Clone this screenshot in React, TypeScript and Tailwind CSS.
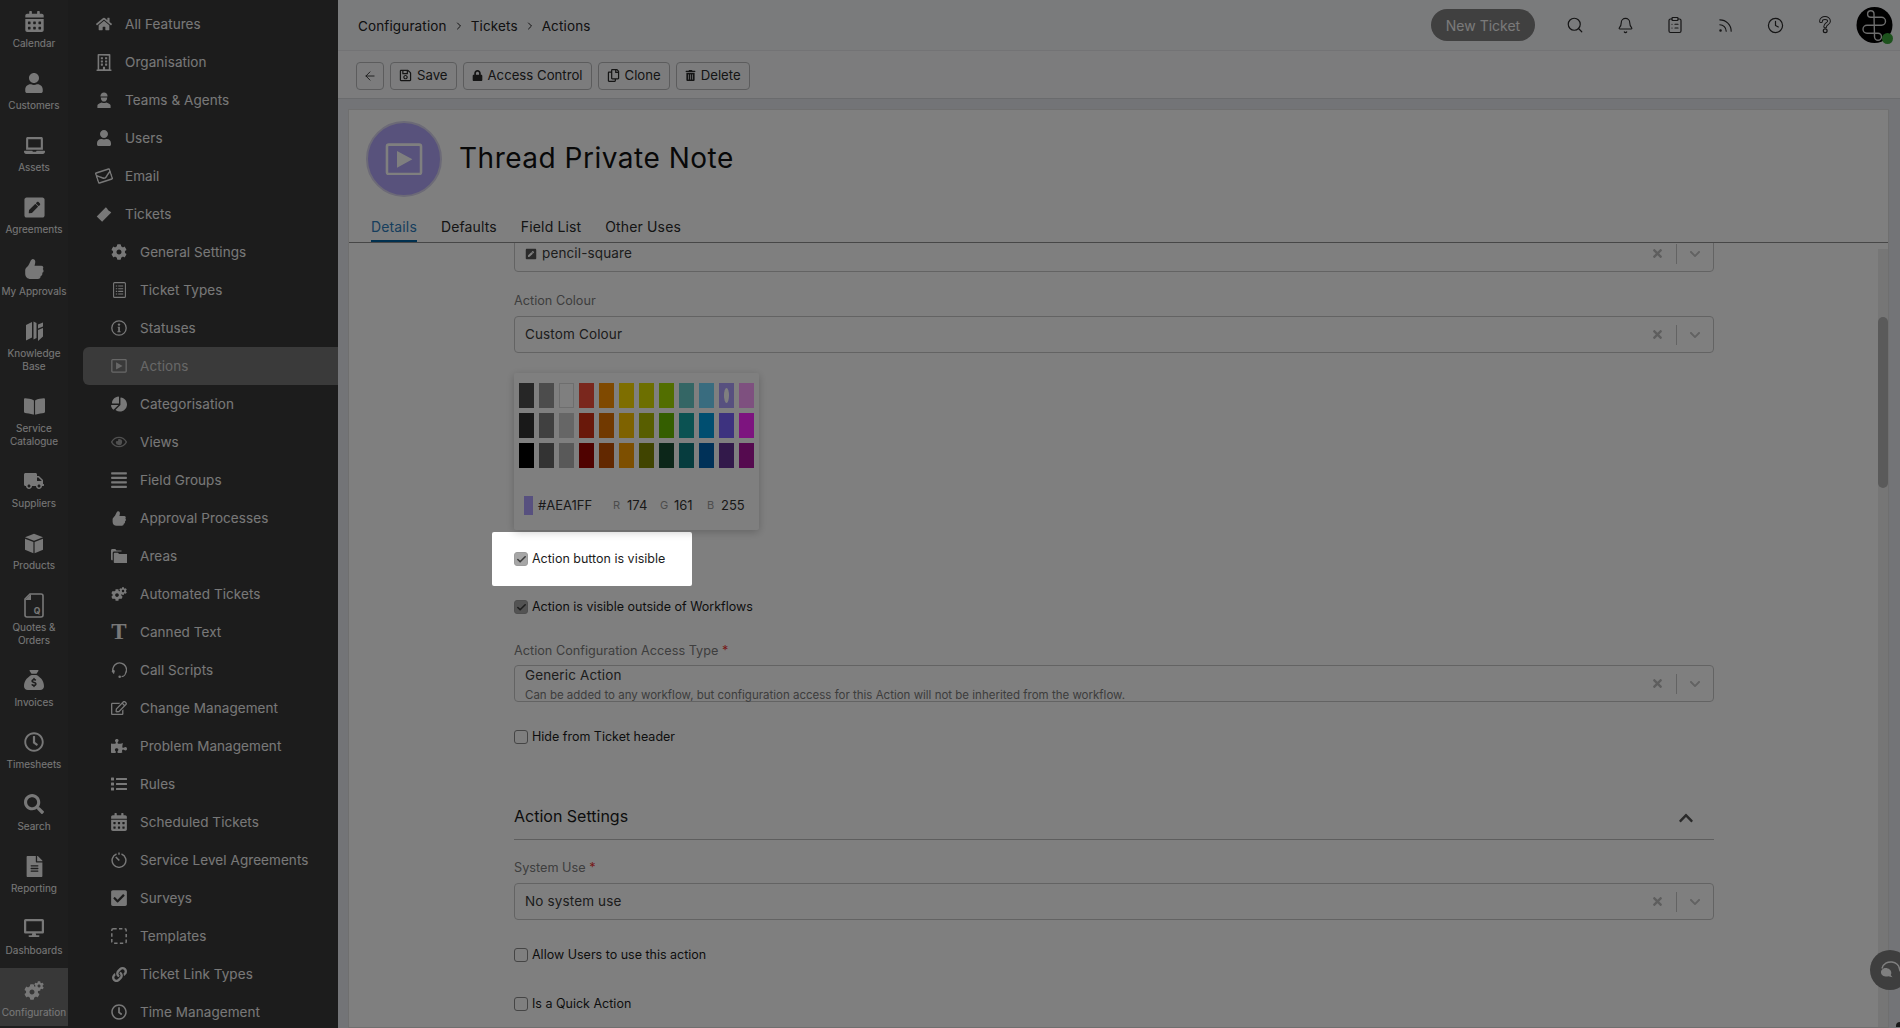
import React from "react";
import {
  FaHome, FaRegBuilding, FaUser, FaRegEnvelope, FaCog, FaChartPie, FaRegEye, FaAlignJustify,
  FaRegEdit, FaPuzzlePiece, FaList, FaCalendarAlt, FaCheckSquare, FaLink, FaRegClock,
  FaPenSquare, FaBookOpen, FaTruck, FaSearch, FaFileAlt, FaDesktop, FaLaptop, FaRegSave, FaLock,
  FaRegCopy, FaTrashAlt, FaTimes, FaChevronDown, FaChevronUp,
} from "react-icons/fa";
import { FaSackDollar } from "react-icons/fa6";
import { ArrowLeft, Search, Bell, ClipboardList, Rss, Clock, Check, ChevronRight } from "lucide-react";

const QuoteIcon = () => (
  <svg width="20" height="25" viewBox="0 0 20 25" fill="none">
    <path d="M6 1H17a2 2 0 0 1 2 2V22a2 2 0 0 1-2 2H3a2 2 0 0 1-2-2V6Z" stroke="currentColor" strokeWidth="1.6" fill="none" />
    <path d="M1 7H7V1Z" fill="currentColor" />
    <text x="13" y="21" textAnchor="middle" fontSize="8.5" fontWeight="700" fill="currentColor" fontFamily="Inter, sans-serif">Q</text>
  </svg>
);
const PlayBox = ({ size = 16, stroke = 1.3 }: { size?: number; stroke?: number }) => (
  <svg width={size} height={size * 0.86} viewBox="0 0 16 14" fill="none">
    <rect x=".7" y=".7" width="14.6" height="12.6" rx=".8" stroke="currentColor" strokeWidth={stroke} />
    <path d="M5 3.4 11.6 7 5 10.6Z" fill="currentColor" />
  </svg>
);
const Thumb = ({ size }: { size: number }) => (
  <svg width={size} height={size} viewBox="0 0 20 20" fill="currentColor">
    <path d="M9 1C11 1 11.500 3 11 5L10.500 7H16.500C18.500 7 19 9 18 10C19 11 19 13 17.500 13.500C18 15 17 16.500 16 16.500C16 18 15 19 13.500 19H7C4 19 2 17 2 14V11C2 9 4 8 5 6.500C6.500 4.500 7 1 9 1Z" />
  </svg>
);
const Books = () => (
  <svg width="20" height="22" viewBox="0 0 20 22" fill="currentColor">
    <path d="M2 5 8 2V17.500L2 20.500Z" />
    <path d="M9.500 1.500 12.500 3V18L9.500 19.500Z" />
    <path d="M14 4.500 19 2.500V6.500L14 8.500ZM14 10 19 8V16.500L14 21Z" />
  </svg>
);
const Crate = () => (
  <svg width="20" height="21" viewBox="0 0 20 21" fill="currentColor">
    <path d="M10 .8 19 4.300 10 7.800 1 4.300Z" />
    <path d="M1 5.800 9.400 9.100V20.300L1 16.800Z" />
    <path d="M19 5.800 10.600 9.100V20.300L19 16.800Z" />
  </svg>
);
const Cogs = ({ big, small }: { big: number; small: number }) => (
  <span className="relative inline-block" style={{ width: big + small * 0.45, height: big + small * 0.3 }}>
    <FaCog size={big} className="absolute left-0 bottom-0" />
    <FaCog size={small} className="absolute right-0 top-0" />
  </span>
);
const HardHat = () => (
  <svg width="14" height="16" viewBox="0 0 14 16" fill="currentColor">
    <path d="M3.400 4.600C3.400 1.800 5 .4 7 .4s3.600 1.400 3.600 4.200Z" />
    <path d="M3.800 5.400h6.400C10.200 8 8.800 9.600 7 9.600S3.800 8 3.800 5.400Z" />
    <path d="M.4 16v-2.400c0-1.600 2.600-2.600 4.400-3.200.7.5 1.400.7 2.200.7s1.500-.2 2.200-.7c1.800.6 4.400 1.600 4.400 3.200V16Z" />
  </svg>
);
const Ticket = () => (
  <svg width="17" height="17" viewBox="0 0 17 17" fill="currentColor">
    <path d="M10.500.8 12 2.300C12.300 3.300 13.700 4.700 14.700 5L16.200 6.500 6.500 16.200 .8 10.500Z" />
  </svg>
);
const ListBox = () => (
  <svg width="13" height="16" viewBox="0 0 13 16" fill="none" stroke="currentColor">
    <rect x=".6" y=".6" width="11.800" height="14.800" rx="1" strokeWidth="1.100" />
    <path d="M2.800 4h1.400M5.200 4h5M2.800 6.700h1.400M5.200 6.700h5M2.800 9.400h1.400M5.200 9.400h5M2.800 12h1.400M5.200 12h5" strokeWidth="1.100" />
  </svg>
);
const InfoRing = () => (
  <svg width="16" height="16" viewBox="0 0 16 16" fill="none">
    <circle cx="8" cy="8" r="7.200" stroke="currentColor" strokeWidth="1.300" />
    <circle cx="8" cy="4.600" r="1.200" fill="currentColor" />
    <path d="M6.700 6.800h2.200v4.400h.7v1H6.400v-1h.8V7.800h-.5Z" fill="currentColor" />
  </svg>
);
const FolderStack = () => (
  <svg width="16" height="14" viewBox="0 0 16 14" fill="currentColor">
    <path d="M0 1.500C0 .7.6 0 1.300 0h3l1.200 1.400h5V2.600H3.200c-.9 0-1.500.7-1.500 1.500v7.200H1.300C.6 11.300 0 10.700 0 10Z" />
    <path d="M2.800 4.800c0-.6.5-1.100 1.100-1.100h3l1.200 1.300H16v9H3.900c-.6 0-1.100-.5-1.100-1.100Z" />
  </svg>
);
const Headset = () => (
  <svg width="16" height="16" viewBox="0 0 16 16" fill="none" stroke="currentColor">
    <path d="M3 11.500A6.800 6.800 0 1 1 14.600 11" strokeWidth="1.500" fill="none" />
    <path d="M14.600 11c-.3 2-2 3.400-4 3.700" strokeWidth="1.200" />
    <circle cx="2.300" cy="9.200" r="1.400" fill="currentColor" stroke="none" />
    <circle cx="8.700" cy="14.700" r="1.300" fill="currentColor" stroke="none" />
  </svg>
);
const Stopwatch = () => (
  <svg width="16" height="16" viewBox="0 0 16 16" fill="none" stroke="currentColor">
    <path d="M5.500 2A6.900 6.900 0 1 0 10.500 2" strokeWidth="1.400" />
    <path d="M8 .5v2.200" strokeWidth="1.500" />
    <path d="M4.800 5 8.300 8.500" strokeWidth="1.700" />
  </svg>
);
const Dashed = () => (
  <svg width="16" height="16" viewBox="0 0 16 16" fill="none" stroke="currentColor">
    <rect x=".8" y=".8" width="14.400" height="14.400" rx="1.500" strokeWidth="1.500" strokeDasharray="3.400 2.300" />
  </svg>
);
const Serif = () => <span className="font-['Liberation_Serif',serif] font-bold text-[23px] leading-[16px]">T</span>;
const HelpMark = () => (
  <svg width="14" height="18" viewBox="0 0 14 18" fill="none">
    <path d="M3 5.200C3 3 5 2 7 2s4 1.200 4 3.200c0 2.400-3.800 2.800-3.800 5.200" stroke="#2a2a2a" strokeWidth="3.800" strokeLinecap="round" />
    <path d="M3 5.200C3 3 5 2 7 2s4 1.200 4 3.200c0 2.400-3.800 2.800-3.800 5.200" stroke="#f5f6f9" strokeWidth="1.800" strokeLinecap="round" />
    <circle cx="7.200" cy="14.800" r="1.900" stroke="#2a2a2a" strokeWidth="1.200" />
  </svg>
);
const Logo = () => (
  <svg width="37" height="36" viewBox="0 0 37 36" fill="none">
    <circle cx="18.500" cy="18" r="18" fill="#000" />
    <path d="M18 7A3.200 3.200 0 1 0 14.800 10.200H25.500A4 4 0 0 1 25.500 18.200H11A4 4 0 0 0 11 26.200H22A3.500 3.500 0 1 1 18.500 29.700C18.500 25 18 12 18 7Z" stroke="#d8d8d8" strokeWidth="1.400" strokeLinejoin="round" />
  </svg>
);
const Bubbles = () => (
  <svg width="24" height="20" viewBox="0 0 24 20">
    <path d="M3 8.500C4 3.500 9 1.500 13 2c4 .5 7 3.500 7.500 7 .2 2 1.500 3 2.500 3.800" fill="none" stroke="#fff" strokeWidth="1.500" />
    <path d="M6.500 8c3.200 0 5.800 2.200 5.800 4.700 0 1.400-.6 2.300-.6 2.300l1.800 2.200-4.200-.9c-3.500.8-7.300-1-7.300-3.900C2 10.300 3.900 8 6.500 8Z" fill="#fff" />
  </svg>
);

const rail: { l: string[]; i: React.ReactNode }[] = [
  { l: ["Calendar"], i: <FaCalendarAlt size={21} /> },
  { l: ["Customers"], i: <FaUser size={20} /> },
  { l: ["Assets"], i: <FaLaptop size={21} /> },
  { l: ["Agreements"], i: <FaPenSquare size={23} /> },
  { l: ["My Approvals"], i: <Thumb size={22} /> },
  { l: ["Knowledge", "Base"], i: <Books /> },
  { l: ["Service", "Catalogue"], i: <FaBookOpen size={21} /> },
  { l: ["Suppliers"], i: <FaTruck size={20} /> },
  { l: ["Products"], i: <Crate /> },
  { l: ["Quotes &", "Orders"], i: <QuoteIcon /> },
  { l: ["Invoices"], i: <FaSackDollar size={20} /> },
  { l: ["Timesheets"], i: <FaRegClock size={20} /> },
  { l: ["Search"], i: <FaSearch size={20} /> },
  { l: ["Reporting"], i: <FaFileAlt size={21} /> },
  { l: ["Dashboards"], i: <FaDesktop size={20} /> },
  { l: ["Configuration"], i: <Cogs big={16} small={10} /> },
];

const nav: { t: string; i: React.ReactNode; sub?: boolean; active?: boolean; dim?: boolean }[] = [
  { t: "All Features", i: <FaHome size={16} /> },
  { t: "Organisation", i: <FaRegBuilding size={17} /> },
  { t: "Teams & Agents", i: <HardHat /> },
  { t: "Users", i: <FaUser size={16} /> },
  { t: "Email", i: <FaRegEnvelope size={16} className="-rotate-[18deg]" /> },
  { t: "Tickets", i: <Ticket /> },
  { t: "General Settings", i: <FaCog size={16} />, sub: true },
  { t: "Ticket Types", i: <ListBox />, sub: true },
  { t: "Statuses", i: <InfoRing />, sub: true },
  { t: "Actions", i: <PlayBox />, sub: true, active: true },
  { t: "Categorisation", i: <FaChartPie size={16} className="-scale-x-100" />, sub: true },
  { t: "Views", i: <FaRegEye size={16} />, sub: true, dim: true },
  { t: "Field Groups", i: <FaAlignJustify size={18} />, sub: true },
  { t: "Approval Processes", i: <Thumb size={17} />, sub: true },
  { t: "Areas", i: <FolderStack />, sub: true },
  { t: "Automated Tickets", i: <Cogs big={12} small={8} />, sub: true },
  { t: "Canned Text", i: <Serif />, sub: true },
  { t: "Call Scripts", i: <Headset />, sub: true },
  { t: "Change Management", i: <FaRegEdit size={16} />, sub: true },
  { t: "Problem Management", i: <FaPuzzlePiece size={16} />, sub: true },
  { t: "Rules", i: <FaList size={16} />, sub: true },
  { t: "Scheduled Tickets", i: <FaCalendarAlt size={18} />, sub: true },
  { t: "Service Level Agreements", i: <Stopwatch />, sub: true },
  { t: "Surveys", i: <FaCheckSquare size={18} />, sub: true },
  { t: "Templates", i: <Dashed />, sub: true },
  { t: "Ticket Link Types", i: <FaLink size={15} />, sub: true },
  { t: "Time Management", i: <FaRegClock size={16} />, sub: true },
];

const palette = [
  "#4D4D4D", "#999999", "#FFFFFF", "#F44E3B", "#FE9200", "#FCDC00", "#DBDF00", "#A4DD00", "#68CCCA", "#73D8FF", "#AEA1FF", "#FDA1FF",
  "#333333", "#808080", "#CCCCCC", "#D33115", "#E27300", "#FCC400", "#B0BC00", "#68BC00", "#16A5A5", "#009CE0", "#7B64FF", "#FA28FF",
  "#000000", "#666666", "#B3B3B3", "#9F0500", "#C45100", "#FB9E00", "#808900", "#194D33", "#0C797D", "#0062B1", "#653294", "#AB149E",
];

const Select = ({ children }: { children: React.ReactNode }) => (
  <div className="h-[37px] border border-[#c6c6c6] rounded-[4px] flex items-center pl-[10px] bg-white text-[13.500px] tracking-[0.01em] text-[#3a3a3a]">
    <div className="flex-1 min-w-0">{children}</div>
    <FaTimes size={13} className="text-[#bdbdbd]" />
    <span className="w-px h-[20px] bg-[#c6c6c6] ml-[12px]" />
    <FaChevronDown size={12} className="text-[#c4c4c4] ml-[12px] mr-[12px]" />
  </div>
);
const Box = ({ on }: { on?: boolean }) => (
  <span className={`w-[14px] h-[14px] rounded-[3px] border flex items-center justify-center shrink-0 ${on ? "bg-[#a6a6a6] border-[#9c9c9c]" : "bg-white border-[#8a8a8a]"}`}>
    {on && <Check size={11} strokeWidth={3.5} className="text-[#3c3c3c]" />}
  </span>
);
const CheckRow = ({ label, on, className }: { label: string; on?: boolean; className: string }) => (
  <div className={`flex items-center gap-[4px] h-[20px] text-[12.500px] text-[#1c1c1c] ${className}`}>
    <Box on={on} />
    <span>{label}</span>
  </div>
);
const Label = ({ t, req, className }: { t: string; req?: boolean; className: string }) => (
  <div className={`h-[20px] leading-[20px] text-[12.700px] text-[#7c7c7c] ${className}`}>
    {t} {req && <span className="text-[#e33]">*</span>}
  </div>
);
const Btn = ({ icon, t, narrow }: { icon: React.ReactNode; t?: string; narrow?: boolean }) => (
  <div className={`h-[28px] border border-[#b8b8bb] rounded-[4px] flex items-center gap-[5px] text-[13.200px] text-[#2a2a2a] ${narrow ? "w-[28px] justify-center" : "px-[8px]"}`}>
    {icon}
    {t && <span>{t}</span>}
  </div>
);

export default function App() {
  return (
    <div className="relative flex w-[1900px] h-[1028px] overflow-hidden bg-white font-['Inter',sans-serif]">
      {/* icon rail */}
      <aside className="w-[68px] shrink-0 bg-[#3d3d3d] text-[#f0f0f0] flex flex-col -mt-[1px]">
        {rail.map((r) => {
          const active = r.l[0] === "Configuration";
          return (
            <div key={r.l[0]} className={`w-[68px] flex flex-col items-center pt-[11px] pb-[7px] mb-[4px] ${active ? "bg-[#707070]" : ""}`}>
              <div className="h-[22px] flex items-center justify-center">{r.i}</div>
              <div className="mt-[5px] text-[10px] leading-[13px] text-center whitespace-nowrap">
                {r.l.map((x) => <div key={x}>{x}</div>)}
              </div>
            </div>
          );
        })}
      </aside>
      {/* nav */}
      <nav className="w-[270px] shrink-0 bg-[#383838] text-[#f0f0f0] pt-[5px] overflow-hidden">
        {nav.map((n) => (
          <div key={n.t} className={`h-[38px] ml-[15px] flex items-center text-[13.500px] tracking-[0.005em] rounded-l-[6px] ${n.sub ? "pl-[28px]" : "pl-[13px]"} ${n.active ? "bg-[#747474] text-[#cfcfcf]" : ""}`}>
            <span className={`w-[16px] flex justify-center shrink-0 mr-[13px] ${n.dim ? "text-[#a0a0a0]" : ""}`}>{n.i}</span>
            <span>{n.t}</span>
          </div>
        ))}
      </nav>
      {/* main */}
      <main className="flex-1 min-w-0 flex flex-col bg-[#e7e9ee]">
        <header className="h-[51px] shrink-0 bg-[#f5f6f9] border-b border-[#e6e7ea] flex items-center text-[#2a2a2a]">
          <div className="pl-[20px] pt-[2px] flex items-center text-[13.500px] tracking-[0.01em] text-[#222]">
            <span>Configuration</span>
            <ChevronRight size={12} className="mx-[6px]" />
            <span>Tickets</span>
            <ChevronRight size={12} className="mx-[6px]" />
            <span>Actions</span>
          </div>
          <div className="ml-auto flex items-center">
            <div className="w-[104px] h-[32px] rounded-full bg-[#808080] text-[#f4f4f4] flex items-center justify-center text-[14px]">New Ticket</div>
            <div className="ml-[15px] flex items-center">
              {[<Search size={18} strokeWidth={1.6} />, <Bell size={17} strokeWidth={1.6} />, <ClipboardList size={18} strokeWidth={1.6} />, <Rss size={17} strokeWidth={1.6} />, <Clock size={17} strokeWidth={1.7} />, <HelpMark />].map((ic, i) => (
                <span key={i} className="w-[50px] flex justify-center">{ic}</span>
              ))}
            </div>
            <div className="relative ml-[6px] mr-[7px] w-[37px] h-[36px]">
              <Logo />
              <span className="absolute right-0 bottom-0 w-[11px] h-[11px] rounded-full bg-[#3aa53a] translate-y-[1px]" />
            </div>
          </div>
        </header>
        <div className="h-[48px] shrink-0 bg-[#f8f9fb] border-b border-[#d5d7db] flex items-center pl-[18px] pt-[2px] gap-[6px]">
          <Btn narrow icon={<ArrowLeft size={14} strokeWidth={1.5} />} />
          <Btn icon={<FaRegSave size={13} />} t="Save" />
          <Btn icon={<FaLock size={11} />} t="Access Control" />
          <Btn icon={<FaRegCopy size={13} />} t="Clone" />
          <Btn icon={<FaTrashAlt size={11} />} t="Delete" />
        </div>
        <div className="flex-1 min-h-0 pl-[10px] pr-[11px] pt-[10px]">
          <section className="h-full bg-white border border-[#dedede] flex flex-col">
            <div className="h-[133px] shrink-0 border-b border-[#8e8e8e] flex flex-col">
              <div className="flex items-center pl-[17px] pt-[11px]">
                <div className="w-[76px] h-[76px] rounded-full bg-[#b0a4f8] border-2 border-[#d8d4ee] flex items-center justify-center text-white">
                  <PlayBox size={38} stroke={1.1} />
                </div>
                <h1 className="ml-[17px] -mt-[3px] text-[28px] leading-[36px] text-[#111] tracking-[0.018em]">Thread Private Note</h1>
              </div>
              <div className="mt-auto flex pl-[22px] gap-[24px] text-[14px] tracking-[0.01em] text-[#2a2a2a]">
                <span className="h-[31px] leading-[31px] border-b-2 border-[#00619f] text-[#2f7dbb]">Details</span>
                <span className="leading-[31px]">Defaults</span>
                <span className="leading-[31px]">Field List</span>
                <span className="leading-[31px]">Other Uses</span>
              </div>
            </div>
            <div className="flex-1 min-h-0 overflow-hidden flex">
              <div className="w-[1200px] ml-[165px] shrink-0 -mt-[8px]">
                <Select>
                  <span className="flex items-center gap-[5px]"><FaPenSquare size={12} className="text-[#555]" />pencil-square</span>
                </Select>
                <Label t="Action Colour" className="mt-[19px] mb-[5px]" />
                <Select>Custom Colour</Select>
                <div className="mt-[20px] w-[245px] h-[157px] bg-white rounded-[2px] shadow-[0_2px_8px_rgba(0,0,0,0.22)] px-[5px] pt-[10px]">
                  <div className="grid grid-cols-[repeat(12,15px)] gap-x-[5px] gap-y-[5px]">
                    {palette.map((c) => (
                      <div key={c} className={`h-[25px] flex items-center justify-center ${c === "#FFFFFF" ? "border border-[#ddd]" : ""}`} style={{ background: c }}>
                        {c === "#AEA1FF" && <span className="w-[5px] h-[15px] rounded-[50%] bg-white" />}
                      </div>
                    ))}
                  </div>
                  <div className="mt-[28px] ml-[5px] flex items-center text-[13px] text-[#333] h-[19px]">
                    <span className="w-[9px] h-[19px] bg-[#AEA1FF]" />
                    <span className="ml-[5px] w-[75px]">#AEA1FF</span>
                    <span className="text-[11px] text-[#999] w-[14px]">R</span>
                    <span className="w-[33px]">174</span>
                    <span className="text-[11px] text-[#999] w-[14px]">G</span>
                    <span className="w-[33px]">161</span>
                    <span className="text-[11px] text-[#999] w-[14px]">B</span>
                    <span>255</span>
                  </div>
                </div>
                <CheckRow label="Action button is visible" on className="mt-[19px]" />
                <CheckRow label="Action is visible outside of Workflows" on className="mt-[28px]" />
                <Label t="Action Configuration Access Type" req className="mt-[24px] mb-[4px]" />
                <Select>
                  <div className="leading-[17px] mt-[3px]">Generic Action</div>
                  <div className="text-[11.500px] tracking-normal leading-[15px] mt-[4px] text-[#7a7a7a] whitespace-nowrap">Can be added to any workflow, but configuration access for this Action will not be inherited from the workflow.</div>
                </Select>
                <CheckRow label="Hide from Ticket header" className="mt-[25px]" />
                <div className="mt-[57px] h-[36px] border-b border-[#bdbdbd] flex items-start justify-between text-[16px] leading-[24px] text-[#1a1a1a]">
                  <span>Action Settings</span>
                  <FaChevronUp size={16} className="text-[#555] mr-[20px] mt-[6px]" />
                </div>
                <Label t="System Use" req className="mt-[18px] mb-[5px]" />
                <Select>No system use</Select>
                <CheckRow label="Allow Users to use this action" className="mt-[25px]" />
                <CheckRow label="Is a Quick Action" className="mt-[29px]" />
              </div>
              <div className="ml-auto w-[10px] mt-[6px] bg-[#ededed] shrink-0">
                <div className="mt-[68px] h-[171px] rounded-full bg-[#b4b4b4]" />
              </div>
            </div>
          </section>
        </div>
      </main>
      {/* chat launcher */}
      <div className="absolute left-[1870px] top-[950px] w-[40px] h-[40px] rounded-full bg-[#7c7c7c] flex items-center pl-[9px]">
        <Bubbles />
      </div>
      <div className="absolute right-0 bottom-[1px] w-[4px] h-[5px] rounded-tl-[4px] bg-[#333]" />
      {/* spotlight */}
      <div className="absolute left-[492px] top-[532px] w-[200px] h-[54px] rounded-[2px] shadow-[0_0_0_3000px_rgba(0,0,0,0.5)] pointer-events-none" />
    </div>
  );
}
